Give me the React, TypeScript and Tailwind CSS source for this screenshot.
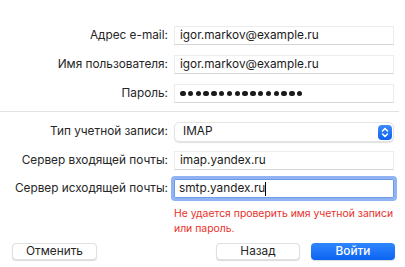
import React from 'react';

const font = { fontFamily: 'Inter, "Liberation Sans", sans-serif' };

function Row({ label, children }: { label: string; children: React.ReactNode }) {
  return (
    <div className="flex items-center">
      <div className="w-[174px] pr-[6px] text-right text-[11.8px] text-[#262626] leading-none whitespace-nowrap">{label}</div>
      {children}
    </div>
  );
}

function Field({ value, focused }: { value: string; focused?: boolean }) {
  if (focused) {
    return (
      <div className="w-[220px] h-[19px] flex items-center bg-white pl-[4px] text-[11.8px] text-[#1a1a1a] outline outline-[3px] outline-[#8fb3f3] border border-[#6d9ae8] rounded-[1px]">
        {value}
        <span className="inline-block w-px h-[14px] bg-black" />
      </div>
    );
  }
  return (
    <div className="w-[220px] h-[19px] flex items-center bg-white pl-[5px] text-[11.8px] text-[#1a1a1a] border border-[#ececec] border-b-[#d6d6d6]">
      {value}
    </div>
  );
}

export default function App() {
  return (
    <div className="w-[405px] h-[267px] bg-white flex flex-col pt-[26px]" style={font}>
      <div className="flex flex-col gap-[10px]">
        <Row label="Адрес e-mail:"><Field value="igor.markov@example.ru" /></Row>
        <Row label="Имя пользователя:"><Field value="igor.markov@example.ru" /></Row>
        <Row label="Пароль:">
          <div className="w-[220px] h-[19px] flex items-center bg-white pl-[5px] border border-[#ececec] border-b-[#d6d6d6] gap-[2.3px]">
            {Array.from({ length: 16 }).map((_, i) => (
              <span key={i} className="w-[5.5px] h-[5.5px] rounded-full bg-[#1a1a1a]" />
            ))}
          </div>
        </Row>
      </div>

      <div className="mt-[8px] mr-[6px] h-px bg-[#e2e2e2]" />

      <div className="flex flex-col gap-[9px] mt-[10px]">
        <Row label="Тип учетной записи:">
          <div className="w-[220px] h-[20px] flex items-center justify-between bg-white rounded-[5px] pl-[8px] pr-[1px] text-[11.8px] text-[#1a1a1a] border border-[#e4e4e4] shadow-[0_1px_1px_rgba(0,0,0,0.12)]">
            <span>IMAP</span>
            <span className="w-[14px] h-[15px] rounded-[4px] bg-gradient-to-b from-[#3b8bff] to-[#0a62f0] flex items-center justify-center">
              <svg width="8" height="11" viewBox="0 0 8 11" fill="none" stroke="white" strokeWidth="1.5" strokeLinecap="round" strokeLinejoin="round">
                <path d="M1.5 4 L4 1.5 L6.5 4" />
                <path d="M1.5 7 L4 9.5 L6.5 7" />
              </svg>
            </span>
          </div>
        </Row>
        <Row label="Сервер входящей почты:"><Field value="imap.yandex.ru" /></Row>
        <Row label="Сервер исходящей почты:"><Field value="smtp.yandex.ru" focused /></Row>
      </div>

      <div className="ml-[174px] mt-[8px] text-[10.4px] leading-[15px] text-[#e8302a] whitespace-nowrap">
        Не удается проверить имя учетной записи<br />или пароль.
      </div>

      <div className="flex items-center mt-[7px] pl-[12px] pr-[10px]">
        <button className="w-[85px] h-[17px] rounded-[4px] bg-white border border-[#e0e0e0] shadow-[0_1px_1px_rgba(0,0,0,0.15)] text-[11.8px] text-[#262626] leading-none">Отменить</button>
        <div className="flex-1" />
        <button className="w-[84px] h-[17px] rounded-[4px] bg-white border border-[#e0e0e0] shadow-[0_1px_1px_rgba(0,0,0,0.15)] text-[11.8px] text-[#262626] leading-none">Назад</button>
        <button className="ml-[11px] w-[84px] h-[17px] rounded-[4px] bg-gradient-to-b from-[#2f86ff] to-[#0b63f0] text-[11.8px] text-white font-medium leading-none shadow-[0_1px_1px_rgba(0,0,0,0.15)]">Войти</button>
      </div>
    </div>
  );
}
